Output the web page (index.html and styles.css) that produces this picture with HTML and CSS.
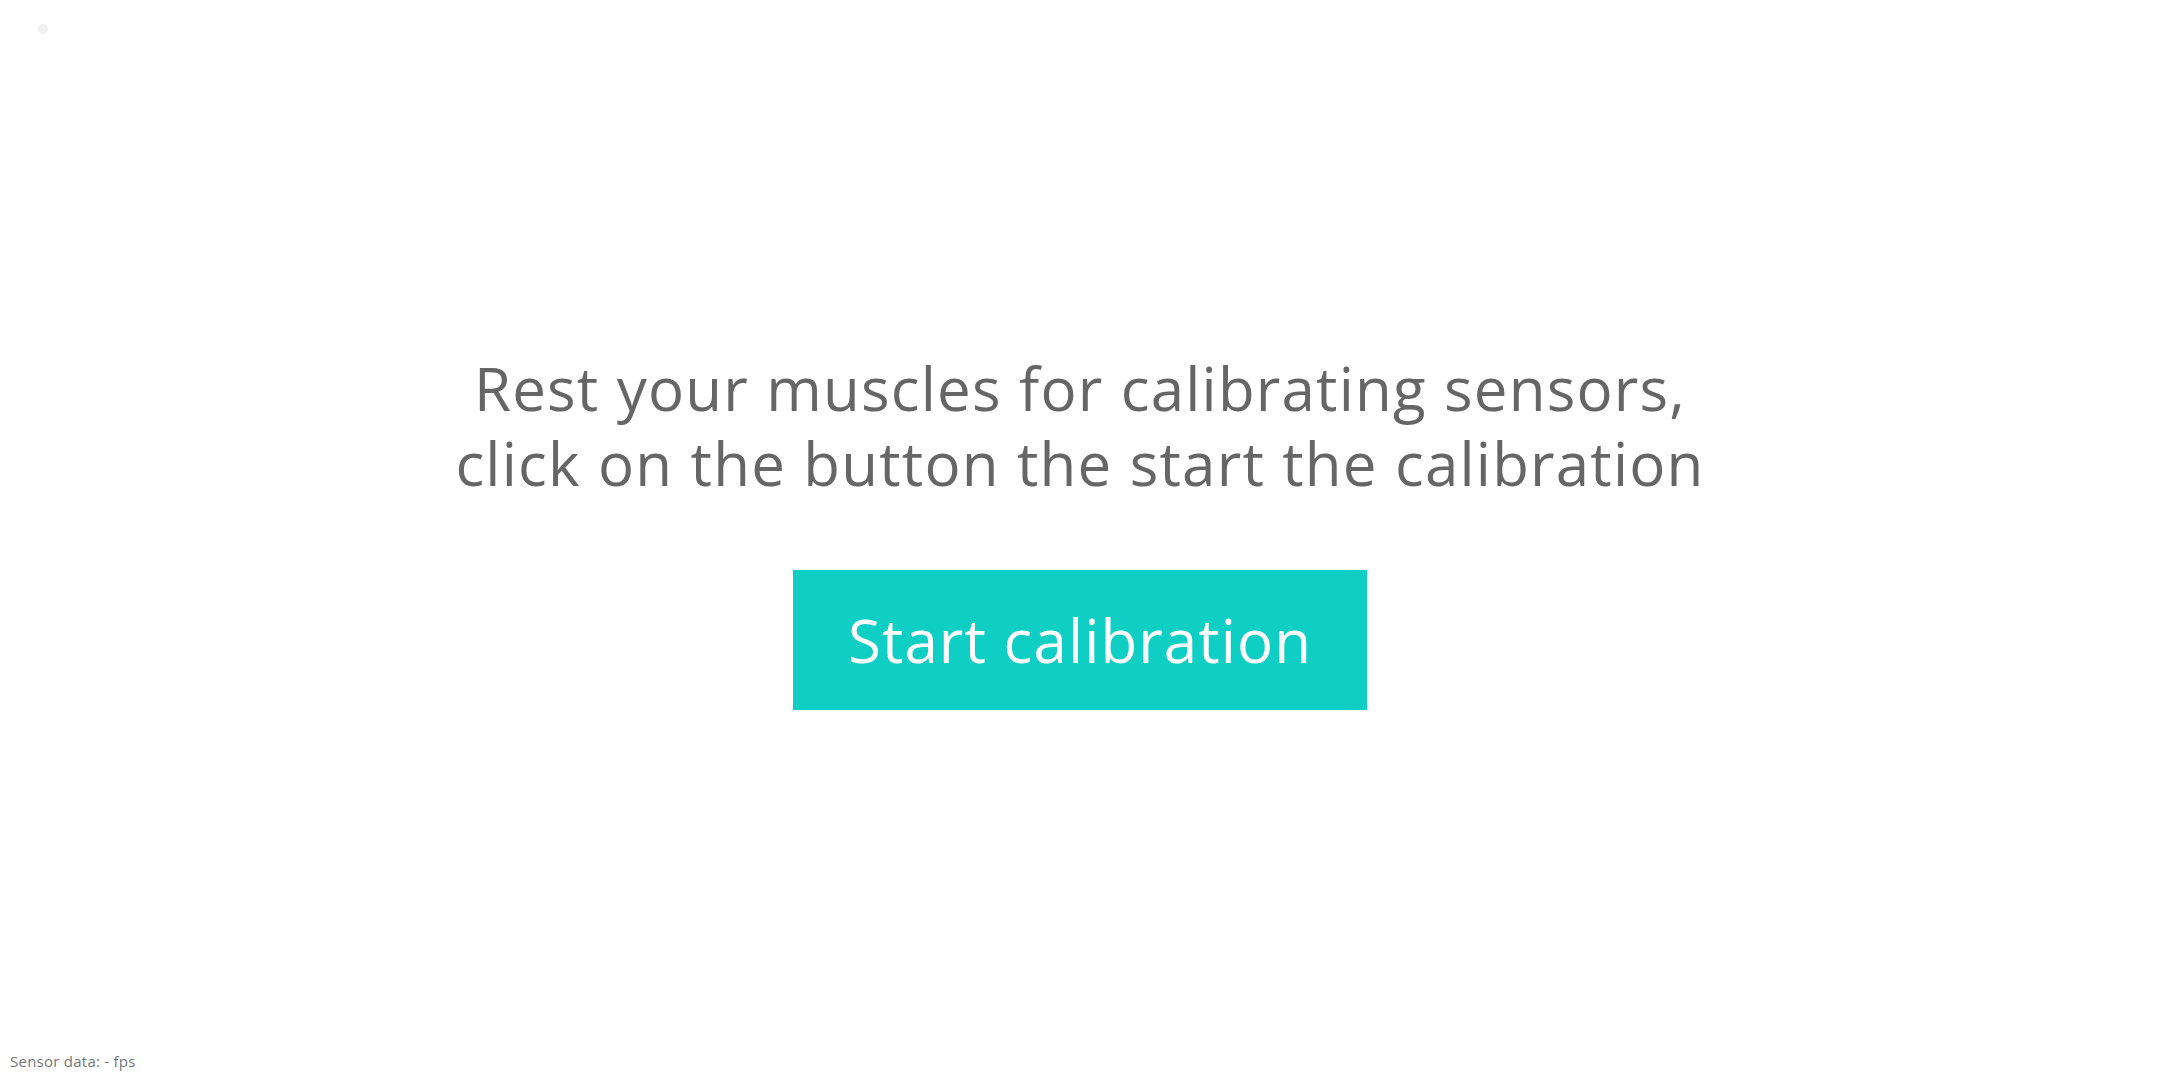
FILE: index.html
```html
<!DOCTYPE html>
<html lang="en">
<head>
<meta charset="utf-8">
<title>Calibration</title>
<link rel="stylesheet" href="styles.css">
</head>
<body>
<div class="page">
  <span class="dot"></span>
  <main class="calibration">
    <h1 class="message">Rest your muscles for calibrating sensors,<br>click on the button the start the calibration</h1>
    <button class="start-btn" type="button">Start calibration</button>
  </main>
  <footer class="status">Sensor data: - fps</footer>
</div>
</body>
</html>
```
FILE: styles.css
```css
html, body {
  margin: 0;
  padding: 0;
  background: #ffffff;
}
body {
  font-family: "Open Sans", "Noto Sans", sans-serif;
}
.page {
  position: relative;
  height: 100vh;
  display: flex;
  flex-direction: column;
}
.dot {
  position: absolute;
  left: 38px;
  top: 24px;
  width: 10px;
  height: 10px;
  border-radius: 50%;
  background: #f0f0f0;
}
.calibration {
  flex: 1;
  display: flex;
  flex-direction: column;
  align-items: center;
  justify-content: center;
  padding-top: 9px;
}
.message {
  margin: 0;
  font-size: 60px;
  line-height: 75px;
  font-weight: 400;
  letter-spacing: 1.2px;
  word-spacing: 0.5px;
  color: #666666;
  text-align: center;
}
.start-btn {
  margin-top: 69px;
  height: 140px;
  padding: 0 55px;
  border: none;
  border-radius: 0;
  background: #0fcec4;
  color: #ffffff;
  font-family: "Open Sans", "Noto Sans", sans-serif;
  font-size: 60px;
  letter-spacing: 1.1px;
  line-height: 140px;
  cursor: pointer;
}
.status {
  padding: 0 0 9px 10px;
  font-size: 15px;
  letter-spacing: 0.25px;
  line-height: 20px;
  color: #777777;
}
```
